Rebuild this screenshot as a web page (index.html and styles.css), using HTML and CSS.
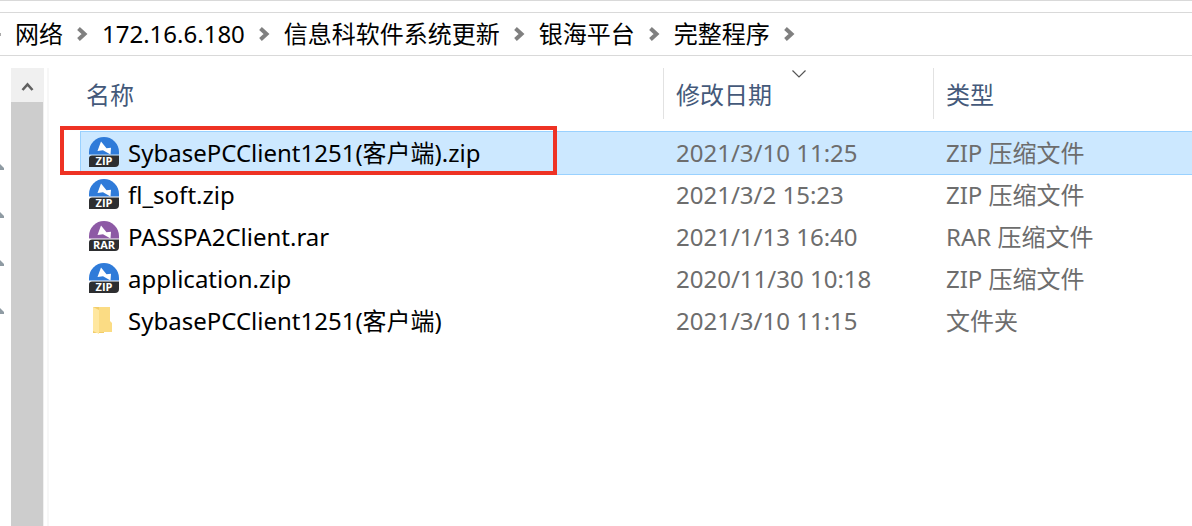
FILE: index.html
```html
<!DOCTYPE html>
<html lang="zh-CN">
<head>
    <meta charset="UTF-8">
    <meta name="viewport" content="width=device-width, initial-scale=1.0">
    <title>完整程序</title>
    <link rel="stylesheet" href="styles.css">
</head>
<body>
    <!-- Shared icons -->
    <svg class="sprite" width="0" height="0" aria-hidden="true">
        <symbol id="chevron" viewBox="0 0 11 16">
            <path d="M1.5 2.5 L7.5 8 L1.5 13.5" fill="none" stroke="#808080" stroke-width="4"/>
        </symbol>
        <symbol id="pin" viewBox="0 0 5 8">
            <path d="M0 0 L4 4 V6 H0 Z" fill="#8f9ba3"/>
        </symbol>
        <symbol id="archive" viewBox="0 0 30 30">
            <path d="M0 17.5 V15 A15 15 0 0 1 30 15 V17.5 Z" fill="currentColor"/>
            <path d="M12 4.5 L17.5 11.2 L22 10.8 L21.5 17.5 L14 13.2 L8.5 14 Z" fill="#fff"/>
            <path d="M3 18.5 H30 V26 Q30 30 26 30 H0 V21.5 Q0 18.5 3 18.5 Z" fill="#2d2e30"/>
        </symbol>
        <symbol id="folder" viewBox="0 0 30 30">
            <path d="M4 2 H15 V28 H4 Z" fill="#f2cd6a"/>
            <path d="M10 2 H21 V16 L23 18 V27 H10 Z" fill="#fbdc84"/>
            <path d="M4 2 L10 5 V29 L4 26 Z" fill="#ffe79f"/>
        </symbol>
    </svg>

    <nav class="address-bar">
        <span class="address-more"></span>
        <a href="#">网络</a>
        <svg class="chevron"><use href="#chevron"/></svg>
        <a href="#">172.16.6.180</a>
        <svg class="chevron"><use href="#chevron"/></svg>
        <a href="#">信息科软件系统更新</a>
        <svg class="chevron"><use href="#chevron"/></svg>
        <a href="#">银海平台</a>
        <svg class="chevron"><use href="#chevron"/></svg>
        <a href="#">完整程序</a>
        <svg class="chevron"><use href="#chevron"/></svg>
    </nav>

    <div class="explorer">
        <aside class="pins">
            <svg class="pin"><use href="#pin"/></svg>
            <svg class="pin"><use href="#pin"/></svg>
            <svg class="pin"><use href="#pin"/></svg>
            <svg class="pin"><use href="#pin"/></svg>
        </aside>
        <div class="scrollbar">
            <button class="scroll-up" aria-label="向上滚动">
                <svg width="13" height="10" viewBox="0 0 13 10"><path d="M1.5 8 L6.5 2.5 L11.5 8" fill="none" stroke="#606060" stroke-width="2.6"/></svg>
            </button>
            <div class="scroll-thumb"></div>
        </div>

        <main class="file-pane">
            <table class="files">
                <colgroup>
                    <col class="col-name">
                    <col class="col-date">
                    <col class="col-type">
                </colgroup>
                <thead>
                    <tr>
                        <th><button class="column">名称</button></th>
                        <th>
                            <button class="column">修改日期
                                <svg class="sort" width="14" height="8" viewBox="0 0 14 8"><path d="M0.5 0.5 L7 7 L13.5 0.5" fill="none" stroke="#555" stroke-width="1.2"/></svg>
                            </button>
                        </th>
                        <th><button class="column">类型</button></th>
                    </tr>
                </thead>
                <tbody>
                    <tr class="selected">
                        <td>
                            <div class="file">
                                <svg class="icon zip" viewBox="0 0 30 30"><use href="#archive"/><text x="15" y="28">ZIP</text></svg>
                                <span>SybasePCClient1251(客户端).zip</span>
                            </div>
                            <div class="highlight"></div>
                        </td>
                        <td>2021/3/10 11:25</td>
                        <td>ZIP 压缩文件</td>
                    </tr>
                    <tr>
                        <td>
                            <div class="file">
                                <svg class="icon zip" viewBox="0 0 30 30"><use href="#archive"/><text x="15" y="28">ZIP</text></svg>
                                <span>fl_soft.zip</span>
                            </div>
                        </td>
                        <td>2021/3/2 15:23</td>
                        <td>ZIP 压缩文件</td>
                    </tr>
                    <tr>
                        <td>
                            <div class="file">
                                <svg class="icon rar" viewBox="0 0 30 30"><use href="#archive"/><text x="15" y="28">RAR</text></svg>
                                <span>PASSPA2Client.rar</span>
                            </div>
                        </td>
                        <td>2021/1/13 16:40</td>
                        <td>RAR 压缩文件</td>
                    </tr>
                    <tr>
                        <td>
                            <div class="file">
                                <svg class="icon zip" viewBox="0 0 30 30"><use href="#archive"/><text x="15" y="28">ZIP</text></svg>
                                <span>application.zip</span>
                            </div>
                        </td>
                        <td>2020/11/30 10:18</td>
                        <td>ZIP 压缩文件</td>
                    </tr>
                    <tr>
                        <td>
                            <div class="file">
                                <svg class="icon"><use href="#folder"/></svg>
                                <span>SybasePCClient1251(客户端)</span>
                            </div>
                        </td>
                        <td>2021/3/10 11:15</td>
                        <td>文件夹</td>
                    </tr>
                </tbody>
            </table>
        </main>
    </div>
</body>
</html>
```

FILE: styles.css
```css
* {
    box-sizing: border-box;
}

body {
    font-family: "Noto Sans", "Noto Sans CJK SC", sans-serif;
    font-size: 24px;
    line-height: 32px;
    margin: 0;
    min-height: 100vh;
    display: flex;
    flex-direction: column;
    background: #fff;
    color: #000;
    border-top: 1px solid #d9d9d9;
    overflow: hidden;
}

button {
    font: inherit;
    color: inherit;
    background: none;
    border: 0;
    padding: 0;
}

.sprite {
    position: absolute;
}

/* Address bar */
.address-bar {
    display: flex;
    align-items: center;
    gap: 14px;
    height: 44px;
    margin-top: 11px;
    border-top: 1px solid #d9d9d9;
    border-bottom: 1px solid #d9d9d9;
    white-space: nowrap;
}

.address-bar a {
    color: #000;
    text-decoration: none;
}

.address-more {
    width: 1px;
    height: 3px;
    background: #aaa;
}

.chevron {
    width: 11px;
    height: 16px;
}

/* Navigation pane edge and its scrollbar */
.explorer {
    display: flex;
    flex: 1;
    padding-top: 12px;
}

.pins {
    width: 11px;
    display: flex;
    flex-direction: column;
    gap: 40px;
    padding-top: 96px;
}

.pin {
    width: 5px;
    height: 8px;
}

.scrollbar {
    width: 33px;
    display: flex;
    flex-direction: column;
    background: #f0f0f0;
}

.scroll-up {
    height: 34px;
    display: flex;
    align-items: center;
    justify-content: center;
    padding-top: 3px;
}

.scroll-thumb {
    flex: 1;
    background: #cdcdcd;
    margin-right: 1px;
}

/* File list */
.file-pane {
    flex: 1;
    min-width: 0;
    margin-left: 3px;
    padding-left: 32px;
    border-left: 2px solid #f7f7f7;
}

.files {
    width: 100%;
    table-layout: fixed;
    border-collapse: separate;
    border-spacing: 0;
}

.col-name {
    width: 583px;
}

.col-date {
    width: 270px;
}

.files th {
    height: 64px;
    padding: 0;
    vertical-align: top;
    font-weight: normal;
}

.column {
    position: relative;
    display: block;
    width: 100%;
    height: 51px;
    padding: 2px 12px 0 12px;
    border-right: 1px solid #e2e2e2;
    color: #44597a;
    text-align: left;
}

th:first-child .column {
    padding-left: 5px;
}

th:last-child .column {
    border-right: 0;
}

.sort {
    position: absolute;
    top: 2px;
    left: 50%;
    margin-left: -7px;
}

.files td {
    position: relative;
    height: 42px;
    padding: 0 12px;
    color: #6d6d6d;
    white-space: nowrap;
}

.files td:first-child {
    padding-left: 8px;
    color: #000;
}

.selected {
    background: #cce8ff;
    outline: 1px solid #99d1ff;
}

.file {
    display: flex;
    align-items: flex-start;
    gap: 9px;
}

.icon {
    width: 30px;
    height: 30px;
    flex: none;
}

.icon text {
    font-family: "Open Sans", sans-serif;
    font-size: 11px;
    font-weight: bold;
    text-anchor: middle;
    fill: #fff;
}

.zip {
    color: #2f7bd9;
}

.rar {
    color: #8d5aa5;
}

/* Red frame round the selected file */
.highlight {
    position: absolute;
    top: -6px;
    left: -21px;
    width: 497px;
    height: 49px;
    border: 4px solid #ee3224;
    z-index: 1;
}
```
